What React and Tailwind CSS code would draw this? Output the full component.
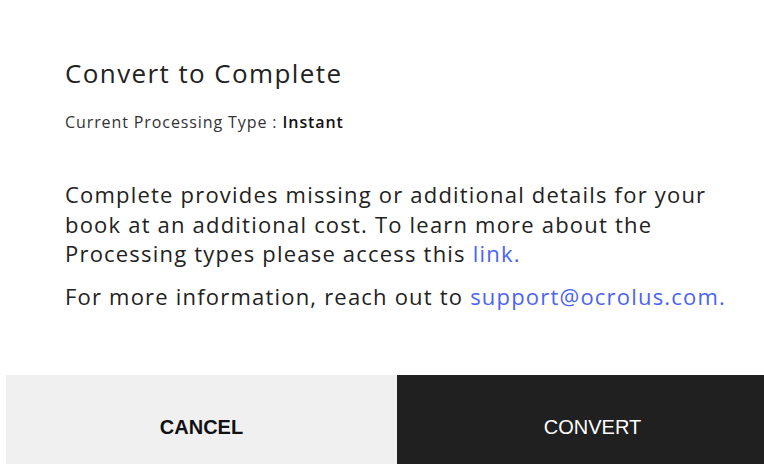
export default function App() {
  return (
    <div className="w-[764px] h-[464px] overflow-hidden bg-white" style={{ fontFamily: '"Open Sans", sans-serif' }}>
      <div className="w-[782px] ml-[6px] flex flex-col h-[464px]">
        <div className="flex-1 px-[59px] pt-[55px] text-[#222]">
          <h1 className="text-[26px] leading-[36px] font-normal tracking-[1.4px] text-[#222]">Convert to Complete</h1>
          <p className="mt-[21px] text-[16px] leading-[20px] tracking-[0.9px] text-[#333]">
            Current Processing Type : <span className="font-semibold text-[#111]">Instant</span>
          </p>
          <p className="mt-[48px] text-[22px] leading-[29.5px] tracking-[1.2px] w-[680px]">
            Complete provides missing or additional details for your book at an additional cost. To learn more about the Processing types please access this{' '}
            <a className="text-[#4c63f7]">link.</a>
          </p>
          <p className="mt-[13.5px] text-[22px] leading-[29.5px] tracking-[1.2px]">
            For more information, reach out to <a className="text-[#4c63f7]">support@ocrolus.com.</a>
          </p>
        </div>
        <div className="flex h-[89px]" style={{ fontFamily: '"Liberation Sans", Arial, sans-serif' }}>
          <button className="flex-1 bg-[#f0f0f0] text-[#111] text-[20px] font-bold pt-[14px]">CANCEL</button>
          <button className="flex-1 bg-[#202020] text-white text-[20px] pt-[14px]">CONVERT</button>
        </div>
      </div>
    </div>
  )
}
